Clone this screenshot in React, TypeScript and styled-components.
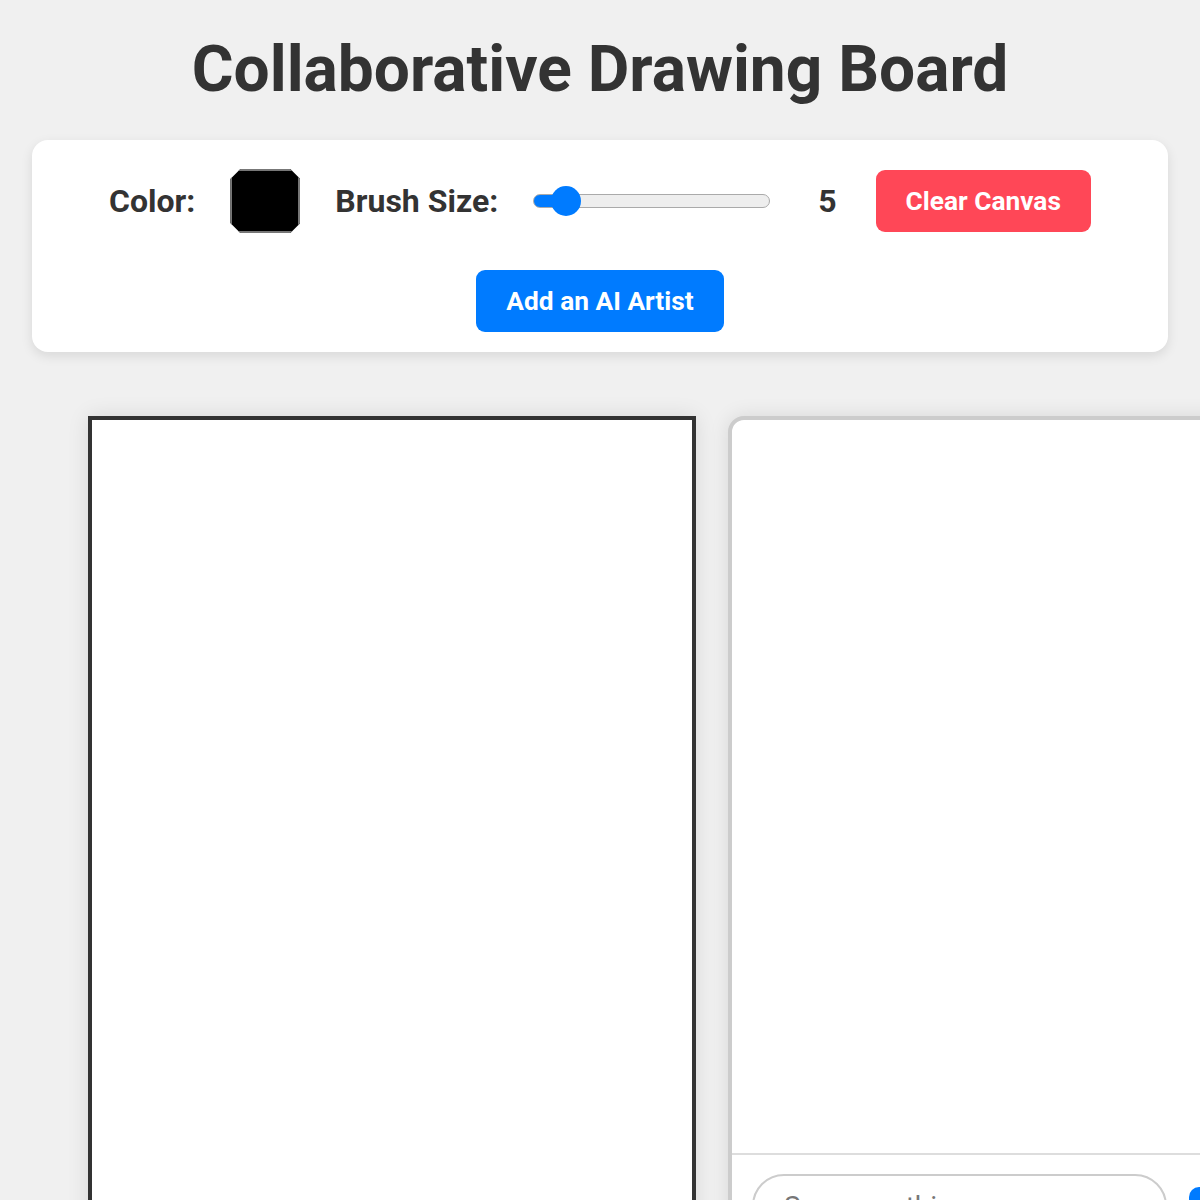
import styled, { createGlobalStyle } from "styled-components";

const GlobalStyle = createGlobalStyle`
    html, body {
        margin: 0;
        padding: 0;
        background-color: #f0f0f0;
        font-family: Roboto, "Liberation Sans", sans-serif;
        color: #333333;
        overflow: hidden;
    }
`;

const Page = styled.div`
    padding: 0 32px;
`;

const Title = styled.h1`
    margin: 0;
    padding-top: 32px;
    text-align: center;
    font-size: 64px;
    font-weight: 700;
    line-height: 76px;
    color: #333333;
`;

const Toolbar = styled.div`
    margin-top: 32px;
    background-color: #ffffff;
    border-radius: 16px;
    box-shadow: 0 4px 12px rgba(0, 0, 0, 0.1);
    padding: 29px 20px 20px;
    display: flex;
    flex-direction: column;
    align-items: center;
    gap: 37px;
`;

const ToolRow = styled.div`
    display: flex;
    align-items: center;
    justify-content: center;
    gap: 35px;
    height: 64px;
`;

const Label = styled.span`
    font-size: 32px;
    font-weight: 700;
    color: #333333;
`;

const Swatch = styled.div<{ $color: string }>`
    width: 70px;
    height: 64px;
    box-sizing: border-box;
    background-color: ${(p) => p.$color};
    border: 2px solid #777777;
    clip-path: polygon(10px 0, calc(100% - 10px) 0, 100% 10px, 100% calc(100% - 10px), calc(100% - 10px) 100%, 10px 100%, 0 calc(100% - 10px), 0 10px);
`;

const Slider = styled.input`
    appearance: none;
    -webkit-appearance: none;
    width: 237px;
    height: 14px;
    margin: 0;
    border: 1px solid #aaaaaa;
    border-radius: 8px;
    box-sizing: border-box;
    outline: none;

    &::-webkit-slider-thumb {
        -webkit-appearance: none;
        width: 30px;
        height: 30px;
        border-radius: 50%;
        background: #007bff;
        border: none;
        cursor: pointer;
    }
`;

const SizeValue = styled.span`
    font-size: 32px;
    font-weight: 700;
    margin-left: 13px;
    margin-right: 4px;
`;

const Button = styled.button<{ $variant: "danger" | "primary" }>`
    height: 62px;
    padding: 0 30px;
    border: none;
    border-radius: 9px;
    background-color: ${(p) => (p.$variant === "danger" ? "#ff4757" : "#007bff")};
    color: #ffffff;
    font-family: Roboto, "Liberation Sans", sans-serif;
    font-size: 26.3px;
    font-weight: 700;
    cursor: pointer;
`;

const Main = styled.div`
    margin-top: 64px;
    padding-left: 56px;
    display: flex;
    align-items: flex-start;
    gap: 32px;
`;

const Canvas = styled.div`
    flex-shrink: 0;
    width: 600px;
    height: 900px;
    background-color: #ffffff;
    border: 4px solid #333333;
    box-shadow: 0 0 20px rgba(0, 0, 0, 0.1);
`;

const ChatPanel = styled.div`
    flex-shrink: 0;
    width: 600px;
    height: 900px;
    box-sizing: border-box;
    background-color: #ffffff;
    border: 4px solid #cccccc;
    border-radius: 16px;
    box-shadow: 0 0 20px rgba(0, 0, 0, 0.1);
    display: flex;
    flex-direction: column;
`;

const Messages = styled.div`
    height: 733px;
    flex-shrink: 0;
`;

const ChatInputRow = styled.div`
    border-top: 2px solid #dddddd;
    padding: 19px 20px 20px;
    display: flex;
    gap: 22px;
`;

const ChatInput = styled.input`
    width: 415px;
    box-sizing: border-box;
    height: 64px;
    padding: 0 30px;
    border: 2px solid #cccccc;
    border-radius: 32px;
    font-family: Roboto, "Liberation Sans", sans-serif;
    font-size: 28px;
    color: #333333;
    outline: none;

    &::placeholder {
        color: #777777;
    }
`;

const SendButton = styled.button`
    flex-shrink: 0;
    width: 120px;
    height: 64px;
    margin-top: 13px;
    border: none;
    border-radius: 10px;
    background-color: #007bff;
    color: #ffffff;
    font-family: Roboto, "Liberation Sans", sans-serif;
    font-size: 26px;
    font-weight: 700;
`;

export default function App() {
    const size = 5;
    const pct = ((size - 1) / 49) * 100;
    return (
        <Page>
            <GlobalStyle />
            <Title>Collaborative Drawing Board</Title>
            <Toolbar>
                <ToolRow>
                    <Label>Color:</Label>
                    <Swatch $color="#000000" />
                    <Label>Brush Size:</Label>
                    <Slider
                        type="range"
                        min={1}
                        max={50}
                        defaultValue={size}
                        style={{ background: `linear-gradient(to right, #007bff 0 ${pct + 6}%, #eeeeee ${pct + 6}% 100%)` }}
                    />
                    <SizeValue>{size}</SizeValue>
                    <Button $variant="danger">Clear Canvas</Button>
                </ToolRow>
                <Button $variant="primary">Add an AI Artist</Button>
            </Toolbar>
            <Main>
                <Canvas />
                <ChatPanel>
                    <Messages />
                    <ChatInputRow>
                        <ChatInput placeholder="Say something..." />
                        <SendButton>Send</SendButton>
                    </ChatInputRow>
                </ChatPanel>
            </Main>
        </Page>
    );
}
